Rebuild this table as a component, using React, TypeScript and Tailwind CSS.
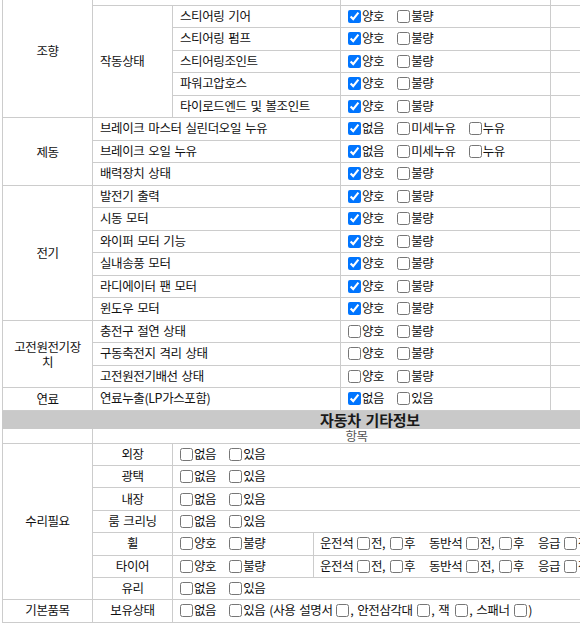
import React from 'react';

type Opt = { label: string; checked?: boolean };

// --- 옵션 프리셋 ---
const good = (c: boolean): Opt[] => [{ label: '양호', checked: c }, { label: '불량' }];
const leak: Opt[] = [{ label: '없음', checked: true }, { label: '미세누유' }, { label: '누유' }];

type Row = { label: string; group?: string; opts: Opt[] };
type Section = { name: React.ReactNode; key: string; rows: Row[] };

const sections: Section[] = [
  {
    key: 'steer',
    name: '조향',
    rows: [
      { label: '동력조향 작동 오일 누유', opts: leak },
      { group: '작동상태', label: '스티어링 기어', opts: good(true) },
      { group: '작동상태', label: '스티어링 펌프', opts: good(true) },
      { group: '작동상태', label: '스티어링조인트', opts: good(true) },
      { group: '작동상태', label: '파워고압호스', opts: good(true) },
      { group: '작동상태', label: '타이로드엔드 및 볼조인트', opts: good(true) },
    ],
  },
  {
    key: 'brake',
    name: '제동',
    rows: [
      { label: '브레이크 마스터 실린더오일 누유', opts: leak },
      { label: '브레이크 오일 누유', opts: leak },
      { label: '배력장치 상태', opts: good(true) },
    ],
  },
  {
    key: 'elec',
    name: '전기',
    rows: [
      { label: '발전기 출력', opts: good(true) },
      { label: '시동 모터', opts: good(true) },
      { label: '와이퍼 모터 기능', opts: good(true) },
      { label: '실내송풍 모터', opts: good(true) },
      { label: '라디에이터 팬 모터', opts: good(true) },
      { label: '윈도우 모터', opts: good(true) },
    ],
  },
  {
    key: 'hv',
    name: (
      <>
        고전원전기장
        <br />치
      </>
    ),
    rows: [
      { label: '충전구 절연 상태', opts: good(false) },
      { label: '구동축전지 격리 상태', opts: good(false) },
      { label: '고전원전기배선 상태', opts: good(false) },
    ],
  },
  {
    key: 'fuel',
    name: '연료',
    rows: [{ label: '연료누출(LP가스포함)', opts: [{ label: '없음', checked: true }, { label: '있음' }] }],
  },
];

const cell = 'border border-[#cccccc] px-[7px] whitespace-nowrap';

const Box = ({ checked }: { checked?: boolean }) => (
  <input type="checkbox" defaultChecked={checked} className="m-0 h-[13px] w-[13px] shrink-0" />
);

const Check = ({ opt }: { opt: Opt }) => (
  <label className="inline-flex items-center">
    <Box checked={opt.checked} />
    <span className="ml-px">{opt.label}</span>
  </label>
);

const Options = ({ opts }: { opts: Opt[] }) => (
  <div className="flex items-center gap-[13px]">
    {opts.map((o) => (
      <Check key={o.label} opt={o} />
    ))}
  </div>
);

const InspectionTable = () => (
  <table className="w-[736px] table-fixed border-collapse">
    <colgroup>
      <col className="w-[90px]" />
      <col className="w-[80px]" />
      <col className="w-[168px]" />
      <col className="w-[210px]" />
      <col />
    </colgroup>
    <tbody>
      {sections.map((sec) =>
        sec.rows.map((row, i) => {
          const groupCount = row.group ? sec.rows.filter((r) => r.group === row.group).length : 0;
          const firstInGroup = row.group && sec.rows.findIndex((r) => r.group === row.group) === i;
          return (
            <tr key={sec.key + row.label} className="h-[22.5px]">
              {i === 0 && (
                <td rowSpan={sec.rows.length} className={`${cell} text-center leading-[15px]`}>
                  {sec.name}
                </td>
              )}
              {row.group ? (
                firstInGroup && (
                  <td rowSpan={groupCount} className={cell}>
                    {row.group}
                  </td>
                )
              ) : null}
              <td colSpan={row.group ? 1 : 2} className={cell}>
                {row.label}
              </td>
              <td className={cell}>
                <Options opts={row.opts} />
              </td>
              <td className={cell}></td>
            </tr>
          );
        })
      )}
    </tbody>
  </table>
);

// 운전석 / 동반석 / 응급 체크
const SeatGroup = ({ name, nameW }: { name: string; nameW: string }) => (
  <>
    <span className={`${nameW} shrink-0`}>{name}</span>
    <Box />
    <span className="ml-px w-[19px] shrink-0">전,</span>
    <Box />
    <span className="ml-px w-[25px] shrink-0">후</span>
  </>
);

const Seats = () => (
  <div className="flex items-center">
    <SeatGroup name="운전석" nameW="w-[37px]" />
    <SeatGroup name="동반석" nameW="w-[37px]" />
    <SeatGroup name="응급" nameW="w-[26px]" />
  </div>
);

const has: Opt[] = [{ label: '없음' }, { label: '있음' }];
const gb: Opt[] = [{ label: '양호' }, { label: '불량' }];

const EtcTable = () => (
  <table className="w-[736px] table-fixed border-collapse">
    <colgroup>
      <col className="w-[90px]" />
      <col className="w-[80px]" />
      <col className="w-[141px]" />
      <col className="w-[307px]" />
      <col />
    </colgroup>
    <tbody>
      <tr className="h-[17.7px]">
        <td colSpan={5} className="border border-[#c9c9c9] bg-[#c9c9c9] text-center text-[15px] font-semibold leading-none tracking-[-0.2px] text-[#1a1a1a]">
          자동차 기타정보
        </td>
      </tr>
      <tr className="h-[14.6px]">
        <td className={cell}></td>
        <td colSpan={3} className="border border-[#cccccc] text-center leading-[12px] text-[#555]">
          항목
        </td>
        <td className={cell}></td>
      </tr>
      {[
        { label: '외장', opts: has },
        { label: '광택', opts: has },
        { label: '내장', opts: has },
        { label: '룸 크리닝', opts: has },
      ].map((r, i) => (
        <tr key={r.label} className="h-[22.35px]">
          {i === 0 && (
            <td rowSpan={7} className={`${cell} text-center`}>
              수리필요
            </td>
          )}
          <td className={`${cell} text-center`}>{r.label}</td>
          <td colSpan={2} className={cell}>
            <Options opts={r.opts} />
          </td>
          <td className={cell}></td>
        </tr>
      ))}
      {['휠', '타이어'].map((l) => (
        <tr key={l} className="h-[22.35px]">
          <td className={`${cell} text-center`}>{l}</td>
          <td className={cell}>
            <Options opts={gb} />
          </td>
          <td className={`${cell} pl-[6px] overflow-hidden`}>
            <Seats />
          </td>
          <td className={cell}></td>
        </tr>
      ))}
      <tr className="h-[22.35px]">
        <td className={`${cell} text-center`}>유리</td>
        <td colSpan={2} className={cell}>
          <Options opts={has} />
        </td>
        <td className={cell}></td>
      </tr>
      <tr className="h-[22.35px]">
        <td className={`${cell} text-center`}>기본품목</td>
        <td className={`${cell} text-center`}>보유상태</td>
        <td colSpan={2} className={cell}>
          <div className="flex items-center">
            <Check opt={{ label: '없음' }} />
            <span className="ml-[13px] flex"><Box /></span>
            <span className="ml-px w-[93px] shrink-0">있음 (사용 설명서</span>
            <Box />
            <span className="ml-px w-[67px] shrink-0">, 안전삼각대</span>
            <Box />
            <span className="ml-px w-[24px] shrink-0">, 잭</span>
            <Box />
            <span className="ml-px w-[45px] shrink-0">, 스패너</span>
            <Box />
            <span className="ml-px">)</span>
          </div>
        </td>
        <td className={cell}></td>
      </tr>
    </tbody>
  </table>
);

export default function App() {
  return (
    <div className="h-[623px] w-[580px] overflow-hidden bg-white font-['Noto_Sans_CJK_KR',sans-serif] text-[12.5px] tracking-[-0.4px] text-[#111] [word-spacing:1.5px]">
      <div className="-mt-[18px] pl-[2px]">
        <InspectionTable />
        <EtcTable />
      </div>
    </div>
  );
}
